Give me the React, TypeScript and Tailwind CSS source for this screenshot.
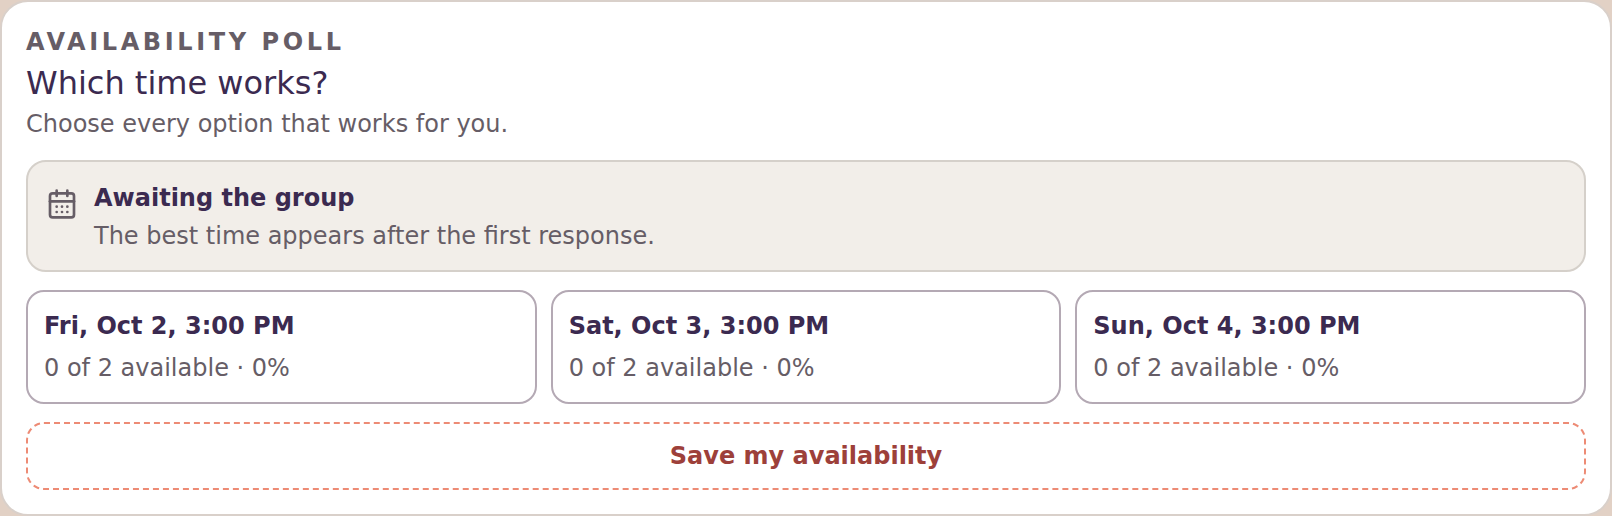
import { useState } from 'react';
import { CalendarDays } from 'lucide-react';

const GROUP_SIZE = 2;

const options = [
  { id: 'fri', label: 'Fri, Oct 2, 3:00 PM', votes: 0 },
  { id: 'sat', label: 'Sat, Oct 3, 3:00 PM', votes: 0 },
  { id: 'sun', label: 'Sun, Oct 4, 3:00 PM', votes: 0 },
];

function PollStatus() {
  return (
    <div className="flex items-start gap-4 rounded-[20px] border-2 border-[#d5d0ca] bg-[#f2eee9] px-[18px] pt-[18px] pb-4">
      <CalendarDays size={32} className="mt-2 shrink-0 text-[#665d66]" aria-hidden="true" />
      <div className="flex flex-col gap-0.5">
        <strong className="font-bold text-[#3b2a50]">Awaiting the group</strong>
        <span>The best time appears after the first response.</span>
      </div>
    </div>
  );
}

export default function App() {
  const [selected, setSelected] = useState<string[]>([]);

  const toggle = (id: string) => {
    setSelected((prev) => (prev.includes(id) ? prev.filter((s) => s !== id) : [...prev, id]));
  };

  return (
    <div className="bg-[#e2d1c5] font-['DejaVu_Sans',sans-serif] text-2xl leading-9 text-[#665d66]">
      <section className="flex flex-col gap-[18px] rounded-[28px] border-2 border-[#d9d0ca] bg-white p-6">
        <header>
          <p className="font-bold uppercase leading-8 tracking-[0.15em]">Availability poll</p>
          <h2 className="mt-1 text-[32px] leading-[42px] text-[#3b2a50]">Which time works?</h2>
          <p className="mt-0.5">Choose every option that works for you.</p>
        </header>

        <PollStatus />

        <div className="grid grid-cols-3 gap-[14px]">
          {options.map((option) => {
            const isSelected = selected.includes(option.id);
            const votes = option.votes + (isSelected ? 1 : 0);
            return (
              <button
                key={option.id}
                type="button"
                aria-pressed={isSelected}
                onClick={() => toggle(option.id)}
                className={`flex flex-col gap-1.5 rounded-[18px] border-2 p-4 text-left ${
                  isSelected ? 'border-[#9d403a] bg-[#fdf3f0]' : 'border-[#b4a9b4] bg-white'
                }`}
              >
                <strong className="font-bold text-[#3b2a50]">{option.label}</strong>
                <span>
                  {votes} of {GROUP_SIZE} available · {Math.round((votes / GROUP_SIZE) * 100)}%
                </span>
              </button>
            );
          })}
        </div>

        <button
          type="button"
          className="rounded-[18px] border-2 border-dashed border-[#ed8b75] px-4 py-[14px] font-bold text-[#9d403a]"
        >
          Save my availability
        </button>
      </section>
    </div>
  );
}
